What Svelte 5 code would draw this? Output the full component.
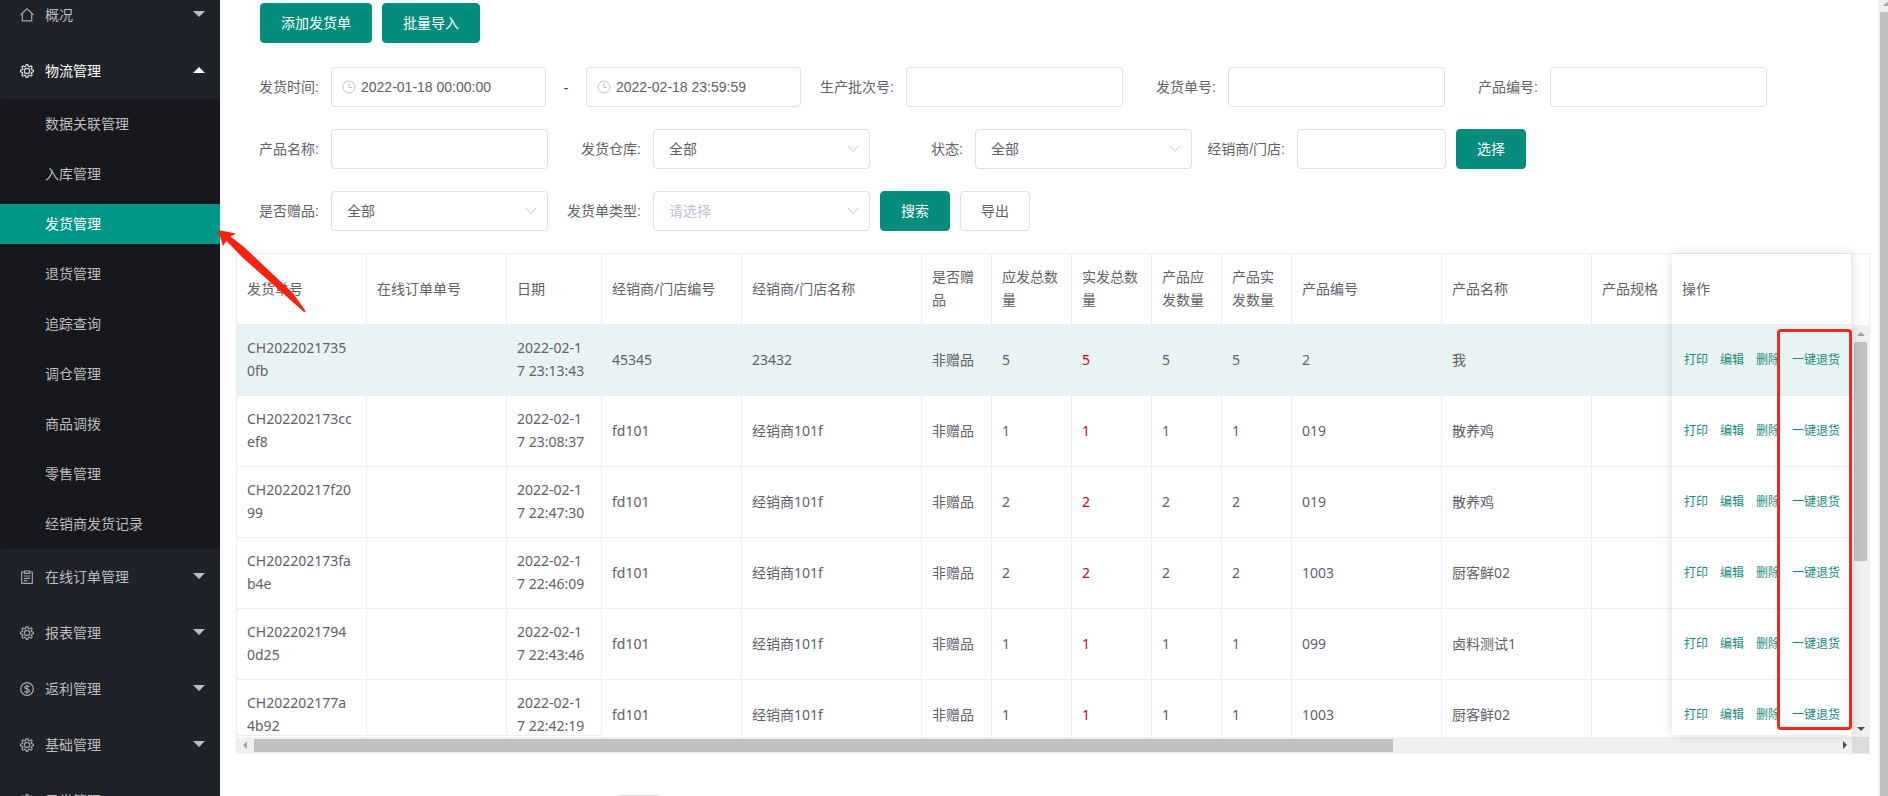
<script>
  const menuTop = [
    { name: '概况', icon: 'home' },
    { name: '物流管理', icon: 'gear', open: true },
  ];
  const sub = ['数据关联管理', '入库管理', '发货管理', '退货管理', '追踪查询', '调仓管理', '商品调拨', '零售管理', '经销商发货记录'];
  const menuBottom = [
    { name: '在线订单管理', icon: 'doc' },
    { name: '报表管理', icon: 'gear' },
    { name: '返利管理', icon: 'coin' },
    { name: '基础管理', icon: 'gear' },
    { name: '异常管理', icon: 'gear' },
  ];
  const columns = [
    ['发货单号', 130], ['在线订单单号', 140], ['日期', 95], ['经销商/门店编号', 140], ['经销商/门店名称', 180],
    ['是否赠品', 70], ['应发总数量', 80], ['实发总数量', 80], ['产品应发数量', 70], ['产品实发数量', 70],
    ['产品编号', 150], ['产品名称', 150], ['产品规格', 150], ['操作', 180],
  ];
  const rows = [
    ['CH2022021735\n0fb', '', '2022-02-1\n7 23:13:43', '45345', '23432', '非赠品', '5', '5', '5', '5', '2', '我', ''],
    ['CH202202173cc\nef8', '', '2022-02-1\n7 23:08:37', 'fd101', '经销商101f', '非赠品', '1', '1', '1', '1', '019', '散养鸡', ''],
    ['CH20220217f20\n99', '', '2022-02-1\n7 22:47:30', 'fd101', '经销商101f', '非赠品', '2', '2', '2', '2', '019', '散养鸡', ''],
    ['CH202202173fa\nb4e', '', '2022-02-1\n7 22:46:09', 'fd101', '经销商101f', '非赠品', '2', '2', '2', '2', '1003', '厨客鲜02', ''],
    ['CH2022021794\n0d25', '', '2022-02-1\n7 22:43:46', 'fd101', '经销商101f', '非赠品', '1', '1', '1', '1', '099', '卤料测试1', ''],
    ['CH202202177a\n4b92', '', '2022-02-1\n7 22:42:19', 'fd101', '经销商101f', '非赠品', '1', '1', '1', '1', '1003', '厨客鲜02', ''],
  ];
  const actions = ['打印', '编辑', '删除', '一键退货'];
  const gear = Array.from({ length: 64 }, (_, i) => {
    const a = (i / 64) * Math.PI * 2;
    const wave = Math.max(-1, Math.min(1, Math.cos(a * 8) * 1.8));
    const r = 5.7 + wave * 0.9;
    return `${(7 + r * Math.sin(a)).toFixed(2)},${(7 - r * Math.cos(a)).toFixed(2)}`;
  }).join(' ');
</script>

{#snippet icon(kind)}
  <svg class="icon" viewBox="0 0 14 14" aria-hidden="true">
    {#if kind === 'home'}
      <path d="M.6 6.800 7 .9l6.400 5.900M2.300 5.500v7.400h9.400V5.500" />
    {:else if kind === 'gear'}
      <polygon points={gear} />
      <circle cx="7" cy="7" r="2.700" />
    {:else if kind === 'doc'}
      <path d="M4.300 2H1.700v11.300h10.600V2H9.700M4.500 1h5v2.400h-5zM4 6h6M4 8.300h6M4 10.600h3.500" />
    {:else}
      <circle cx="7" cy="7" r="6.300" />
      <path d="M9.300 5.200C9 4.200 8.100 3.900 7 3.900c-1.300 0-2.200.6-2.200 1.500C4.800 7.500 9.400 6.400 9.400 8.700c0 1-1 1.600-2.400 1.600-1.300 0-2.200-.5-2.400-1.500M7 2.700v8.700" />
    {/if}
  </svg>
{/snippet}

{#snippet item(m)}
  <li>
    <a class="entry" class:open={m.open} href="#menu">
      {@render icon(m.icon)}
      <span>{m.name}</span>
      <i class="caret"></i>
    </a>
  </li>
{/snippet}

{#snippet clock()}
  <svg class="clock" viewBox="0 0 14 14" aria-hidden="true"><circle cx="7" cy="7" r="6" /><path d="M7 3.500V7.500h3" /></svg>
{/snippet}

{#snippet text(label, id)}
  <div class="field">
    <label for={id}>{label}:</label>
    <input {id} type="text" />
  </div>
{/snippet}

{#snippet choice(label, id, value, hint)}
  <div class="field">
    <label for={id}>{label}:</label>
    <div class="pick">
      <select {id} class:hint><option>{value}</option></select>
      <svg viewBox="0 0 12 8" aria-hidden="true"><path d="M1 1l5 5.500L11 1" /></svg>
    </div>
  </div>
{/snippet}

<div class="app">
  <nav class="side">
    <ul>
      {#each menuTop as m}{@render item(m)}{/each}
      <li>
        <ul class="sub">
          {#each sub as s}
            <li><a href="#sub" class:active={s === '发货管理'}>{s}</a></li>
          {/each}
        </ul>
      </li>
      {#each menuBottom as m}{@render item(m)}{/each}
    </ul>
  </nav>

  <main>
    <div class="tools">
      <button class="btn primary">添加发货单</button>
      <button class="btn primary">批量导入</button>
    </div>

    <form class="filters" onsubmit={(e) => e.preventDefault()}>
      <div class="line">
        <div class="field">
          <label for="from">发货时间:</label>
          <div class="date">{@render clock()}<input id="from" type="text" value="2022-01-18 00:00:00" /></div>
          <span class="dash">-</span>
          <div class="date">{@render clock()}<input id="to" type="text" aria-label="结束时间" value="2022-02-18 23:59:59" /></div>
        </div>
        {@render text('生产批次号', 'batch')}
        {@render text('发货单号', 'order')}
        {@render text('产品编号', 'code')}
      </div>
      <div class="line">
        {@render text('产品名称', 'product')}
        {@render choice('发货仓库', 'store', '全部', false)}
        {@render choice('状态', 'state', '全部', false)}
        <div class="field">
          <label for="dealer">经销商/门店:</label>
          <input id="dealer" class="short" type="text" />
        </div>
        <button class="btn primary" type="button">选择</button>
      </div>
      <div class="line">
        {@render choice('是否赠品', 'gift', '全部', false)}
        {@render choice('发货单类型', 'kind', '请选择', true)}
        <button class="btn primary" type="submit">搜索</button>
        <button class="btn" type="button">导出</button>
      </div>
    </form>

    <div class="grid">
      <div class="view">
        <table>
          <colgroup>
            {#each columns as c}<col style="width: {c[1]}px" />{/each}
          </colgroup>
          <thead>
            <tr>{#each columns as c, i}<th class:stick={i === 13} scope="col">{c[0]}</th>{/each}</tr>
          </thead>
          <tbody>
            {#each rows as r, n}
              <tr class:hover={n === 0}>
                {#each r as v, i}<td class:red={i === 7}>{v}</td>{/each}
                <td class="stick">
                  <div class="acts">{#each actions as a}<button>{a}</button>{/each}</div>
                </td>
              </tr>
            {/each}
          </tbody>
        </table>
        <div class="left-end"></div>
      </div>
      <div class="vbar">
        <div class="gutter"></div>
        <div class="track"><i class="up"></i><b></b><i class="down"></i></div>
      </div>
      <div class="hbar"><i class="prev"></i><div><b></b></div><i class="next"></i></div>
      <div class="corner"></div>
      <div class="shade"></div>
      <div class="mark"></div>
    </div>
    <div class="pager"><div></div></div>
  </main>

  <div class="pagebar"><i class="up"></i><b></b></div>

  <svg class="arrow" viewBox="0 0 90 86" aria-hidden="true">
    <path d="M0 0 18 3.500 12.500 6.500 26 17 62 51 75 63 87.500 81 86.500 82.500 25 28 8.500 11 5 16Z" />
  </svg>
</div>

<style>
  :global(body) {
    margin: 0;
  }
  .app {
    position: relative;
    display: flex;
    height: 100vh;
    overflow: hidden;
    background: #fff;
    color: #606266;
    font: 14px/23px 'Noto Sans', 'Noto Sans CJK SC', sans-serif;
  }
  .app :is(ul, button, input, select) {
    box-sizing: border-box;
    margin: 0;
    padding: 0;
    list-style: none;
  }
  .side {
    flex: 0 0 220px;
    background: #20222a;
    overflow: hidden;
  }
  .side > ul {
    margin-top: -13px;
  }
  .side a {
    box-sizing: border-box;
    display: flex;
    align-items: center;
    padding-bottom: 2px;
    color: #bcbdbf;
    text-decoration: none;
  }
  .side .entry {
    height: 56px;
    padding: 0 15px 2px 20px;
    gap: 11px;
  }
  .side .entry.open {
    color: #fff;
  }
  .entry span {
    flex: 1;
  }
  .icon {
    width: 14px;
    height: 14px;
    margin-top: 2px;
    fill: none;
    stroke: currentColor;
    stroke-width: 1.2;
    opacity: 0.85;
  }
  .caret {
    border: 6px solid transparent;
    border-top-color: currentColor;
    border-bottom-width: 0;
  }
  .open .caret {
    border-width: 0 6px 6px;
    border-bottom-color: currentColor;
  }
  .side .sub {
    background: #17181d;
    border-radius: 2px;
    overflow: hidden;
  }
  .sub a {
    height: 40px;
    margin: 5px 0 10px;
    padding-left: 45px;
  }
  .sub li:last-child a {
    margin-bottom: 5px;
  }
  .sub a.active {
    background: #009688;
    color: #fff;
  }
  main {
    flex: 1;
    min-width: 0;
    padding: 3px 8px 0 16px;
    box-shadow: inset 2px 0 #f7f8f9;
  }
  .tools {
    display: flex;
    gap: 10px;
    padding-left: 24px;
  }
  .btn {
    height: 40px;
    border: 1px solid #dcdfe6;
    border-radius: 4px;
    background: #fff;
    color: #606266;
    font: 14px/20px 'Noto Sans CJK SC', sans-serif;
    white-space: nowrap;
  }
  .app .btn {
    padding: 0 20px 2px;
  }
  .btn.primary {
    background: #048c7c;
    border-color: #048c7c;
    color: #fff;
  }
  .filters {
    display: grid;
    gap: 22px;
    padding: 24px 0 22px;
  }
  .line,
  .field {
    display: flex;
    align-items: center;
  }
  .line {
    gap: 10px;
  }
  label {
    width: 83px;
    padding-right: 12px;
    text-align: right;
    white-space: nowrap;
    font-family: 'Liberation Sans', 'Noto Sans CJK SC', sans-serif;
  }
  .field input,
  .field select {
    width: 217px;
    height: 40px;
    border: 1px solid #dcdfe6;
    border-radius: 4px;
    background: #fff;
    color: #606266;
    font: 14px 'Liberation Sans', 'Noto Sans CJK SC', sans-serif;
  }
  .field select {
    appearance: none;
    padding-left: 15px;
  }
  .field select.hint {
    color: #c0c4cc;
  }
  .field input.short {
    width: 149px;
  }
  .pick,
  .date {
    position: relative;
    display: flex;
  }
  .pick svg {
    position: absolute;
    right: 11px;
    top: 16px;
    width: 12px;
    height: 8px;
    fill: none;
    stroke: #c0c4cc;
    pointer-events: none;
  }
  .date input {
    width: 215px;
    padding-left: 29px;
  }
  .clock {
    position: absolute;
    left: 11px;
    top: 13px;
    width: 14px;
    height: 14px;
    fill: none;
    stroke: #c0c4cc;
  }
  .dash {
    width: 40px;
    text-align: center;
    color: #303133;
  }
  .grid {
    position: relative;
    display: grid;
    grid-template: 483px 16px / minmax(0, 1fr) 17px;
    border: 1px solid #ebeef5;
  }
  .view {
    position: relative;
    overflow: hidden;
  }
  table {
    width: 100%;
    min-width: 1685px;
    table-layout: fixed;
    border-spacing: 0;
  }
  th,
  td {
    height: 46px;
    padding: 11px 10px 13px;
    border-right: 1px solid #ebeef5;
    border-bottom: 1px solid #ebeef5;
    text-align: left;
    font-weight: 400;
    word-break: break-all;
    background: #fff;
  }
  td:not(.stick) {
    white-space: pre-line;
  }
  .hover td {
    background: #e8f4f4;
  }
  td.red {
    color: #d0021b;
  }
  .stick {
    position: sticky;
    right: 0;
  }
  .acts {
    display: flex;
    gap: 12px;
    padding-left: 2px;
  }
  .acts button {
    border: 0;
    background: none;
    color: #1a8a7c;
    font: 12px/20px 'Noto Sans CJK SC', sans-serif;
    white-space: nowrap;
  }
  .left-end {
    position: absolute;
    left: 0;
    bottom: 1px;
    width: 365px;
    height: 1px;
    background: #ebeef5;
  }
  .vbar,
  .track {
    display: flex;
    flex-direction: column;
  }
  .gutter {
    height: 71px;
  }
  .track {
    flex: 1;
    align-items: center;
    justify-content: space-between;
    background: #f0f0f0;
    padding: 7px 0 6px;
  }
  .track b {
    width: 13px;
    height: 219px;
    margin: 6px 0 auto;
    background: #c1c1c1;
  }
  .up,
  .down {
    border: 4px solid transparent;
    border-top-width: 0;
    border-bottom-color: #a3a3a3;
  }
  .down {
    border-width: 4px 4px 0;
    border-top-color: #505050;
  }
  .hbar {
    display: flex;
    align-items: center;
    gap: 7px;
    padding: 0 5px 0 6px;
    background: #f0f0f0;
  }
  .hbar div {
    flex: 1;
  }
  .hbar b {
    display: block;
    width: 72%;
    height: 13px;
    background: #c1c1c1;
  }
  .prev,
  .next {
    border: 4px solid transparent;
    border-left-width: 0;
    border-right-color: #a3a3a3;
  }
  .next {
    border-width: 4px 0 4px 4px;
    border-left-color: #505050;
  }
  .corner {
    background: #dcdcdc;
  }
  .shade {
    position: absolute;
    top: 0;
    right: 17px;
    bottom: 18px;
    width: 180px;
    box-shadow: 0 0 10px rgba(0, 0, 0, 0.14);
    pointer-events: none;
  }
  .mark {
    position: absolute;
    top: 75px;
    right: 17px;
    bottom: 23px;
    width: 69px;
    border: 3px solid #ee2a1e;
    border-radius: 4px;
    pointer-events: none;
  }
  .pager {
    padding: 41px 0 0 381px;
  }
  .pager div {
    width: 42px;
    height: 28px;
    border: 1px solid #dcdcdc;
    border-radius: 3px;
  }
  .pagebar {
    flex: 0 0 10px;
    display: flex;
    flex-direction: column;
    align-items: flex-end;
    background: #f0f0f0;
    overflow: hidden;
  }
  .pagebar .up {
    margin: 2px -3px 6px 0;
  }
  .pagebar b {
    flex: 1;
    width: 8px;
    background: #c1c1c1;
  }
  .arrow {
    position: absolute;
    left: 218px;
    top: 230px;
    width: 90px;
    height: 86px;
    fill: #f9220f;
    pointer-events: none;
  }
</style>
